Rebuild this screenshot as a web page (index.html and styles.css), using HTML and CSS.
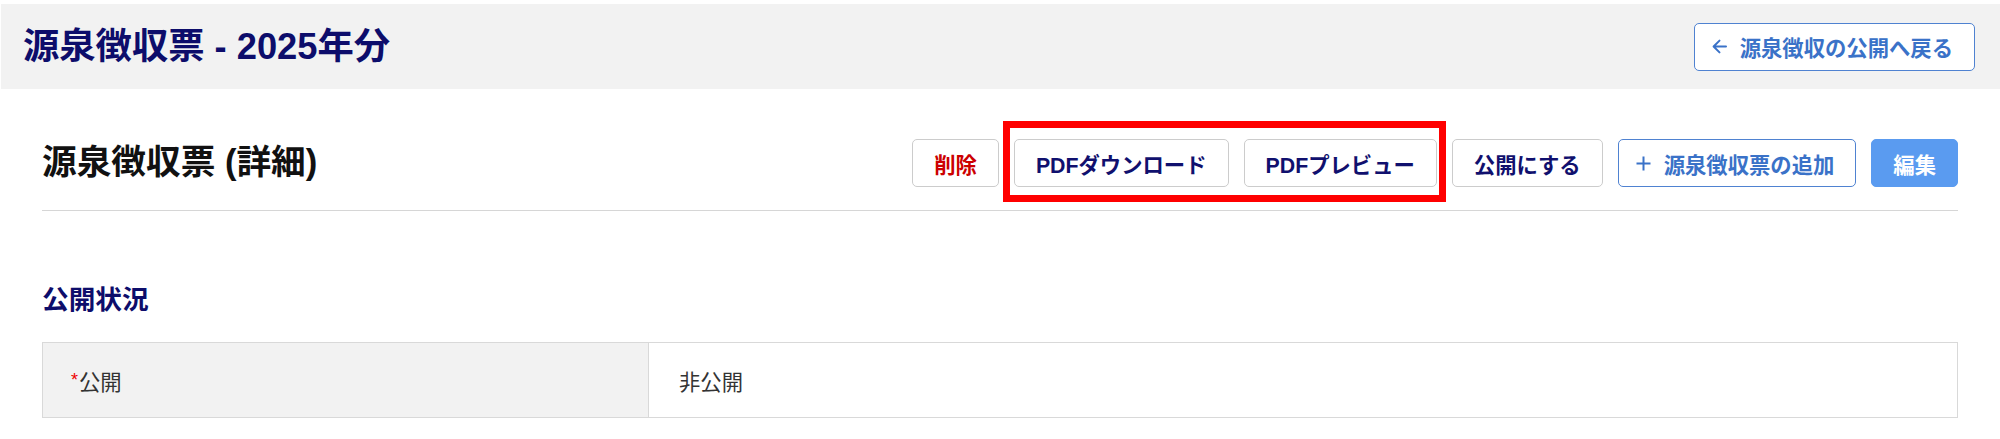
FILE: index.html
```html
<!DOCTYPE html>
<html lang="ja">
<head>
<meta charset="utf-8">
<title>源泉徴収票 - 2025年分</title>
<link rel="stylesheet" href="styles.css">
</head>
<body>
<header class="page-header">
  <h1 class="page-title">源泉徴収票 - 2025年分</h1>
  <a class="btn btn-outline-blue btn-icon" href="#">
    <svg class="icon" width="15" height="15" viewBox="0 0 15 15" aria-hidden="true"><path d="M14 7.5H1.8M7.5 1.6L1.6 7.5L7.5 13.4" fill="none" stroke="currentColor" stroke-width="2" stroke-linecap="round" stroke-linejoin="round"/></svg>
    <span>源泉徴収の公開へ戻る</span>
  </a>
</header>

<main class="content">
  <div class="toolbar">
    <h2 class="section-title">源泉徴収票 (詳細)</h2>
    <div class="actions">
      <button class="btn btn-danger-text">削除</button>
      <div class="highlight">
        <button class="btn btn-navy">PDFダウンロード</button>
        <button class="btn btn-navy">PDFプレビュー</button>
      </div>
      <button class="btn btn-navy">公開にする</button>
      <button class="btn btn-outline-blue btn-icon">
        <svg class="icon" width="15" height="15" viewBox="0 0 15 15" aria-hidden="true"><path d="M7.5 0.5V14.5M0.5 7.5H14.5" fill="none" stroke="currentColor" stroke-width="2"/></svg>
        <span>源泉徴収票の追加</span>
      </button>
      <button class="btn btn-primary">編集</button>
    </div>
  </div>

  <section class="status">
    <h3 class="sub-title">公開状況</h3>
    <div class="detail-table">
      <div class="cell-label"><span class="req">*</span>公開</div>
      <div class="cell-value">非公開</div>
    </div>
  </section>
</main>
</body>
</html>
```

FILE: styles.css
```css
* { box-sizing: border-box; }

body {
  margin: 0;
  background: #ffffff;
  font-family: "Liberation Sans", "Noto Sans CJK JP", sans-serif;
  color: #111111;
}

.page-header {
  margin: 4px 0 0 1px;
  height: 85px;
  background: #f2f2f2;
  display: flex;
  align-items: center;
  justify-content: space-between;
  padding: 0 25px 0 22px;
}

.page-title {
  margin: 0;
  font-size: 36.3px;
  font-weight: 700;
  color: #0d0d6b;
  line-height: 1.2;
}

.btn {
  display: inline-flex;
  align-items: center;
  justify-content: center;
  height: 48px;
  padding: 0 21px;
  border: 1px solid #cccccc;
  border-radius: 5px;
  background: #ffffff;
  font-family: inherit;
  font-size: 21.33px;
  font-weight: 700;
  text-decoration: none;
  white-space: nowrap;
  cursor: pointer;
}

.btn-icon { padding-left: 17px; }
.btn-icon .icon { margin-right: 13px; flex: none; }

.btn-outline-blue {
  border-color: #4f82d1;
  color: #3a72c8;
}

.btn-danger-text { color: #cc0000; }
.btn-navy { color: #10106e; }

.btn-primary {
  background: #5a9bf0;
  border-color: #5a9bf0;
  color: #ffffff;
}

.content {
  padding: 50px 42px 0 42px;
}

.toolbar {
  display: flex;
  align-items: center;
  justify-content: space-between;
  padding-bottom: 23px;
  border-bottom: 1px solid #d6d6d6;
}

.section-title {
  margin: 0;
  font-size: 34.67px;
  font-weight: 700;
  color: #111111;
  line-height: 1.2;
}

.actions {
  display: flex;
  align-items: center;
  gap: 15px;
}

.highlight {
  position: relative;
  display: flex;
  gap: 15px;
}

.highlight::after {
  content: "";
  position: absolute;
  top: -18px;
  bottom: -15px;
  left: -11px;
  right: -9px;
  border: 7px solid #ff0000;
  pointer-events: none;
}

.status {
  padding-top: 73px;
}

.sub-title {
  margin: 0 0 26px 0;
  font-size: 26.67px;
  font-weight: 700;
  color: #0d0d6b;
  line-height: 1.2;
}

.detail-table {
  display: grid;
  grid-template-columns: 606px 1fr;
  border: 1px solid #d9d9d9;
  font-size: 21.33px;
  color: #333333;
}

.cell-label {
  background: #f2f2f2;
  border-right: 1px solid #d9d9d9;
  padding: 0 28px;
  height: 74px;
  display: flex;
  align-items: center;
}

.cell-value {
  padding: 0 30px;
  height: 74px;
  display: flex;
  align-items: center;
}

.req {
  color: #ee0000;
  font-size: 18px;
  margin-right: 1px;
}
```
